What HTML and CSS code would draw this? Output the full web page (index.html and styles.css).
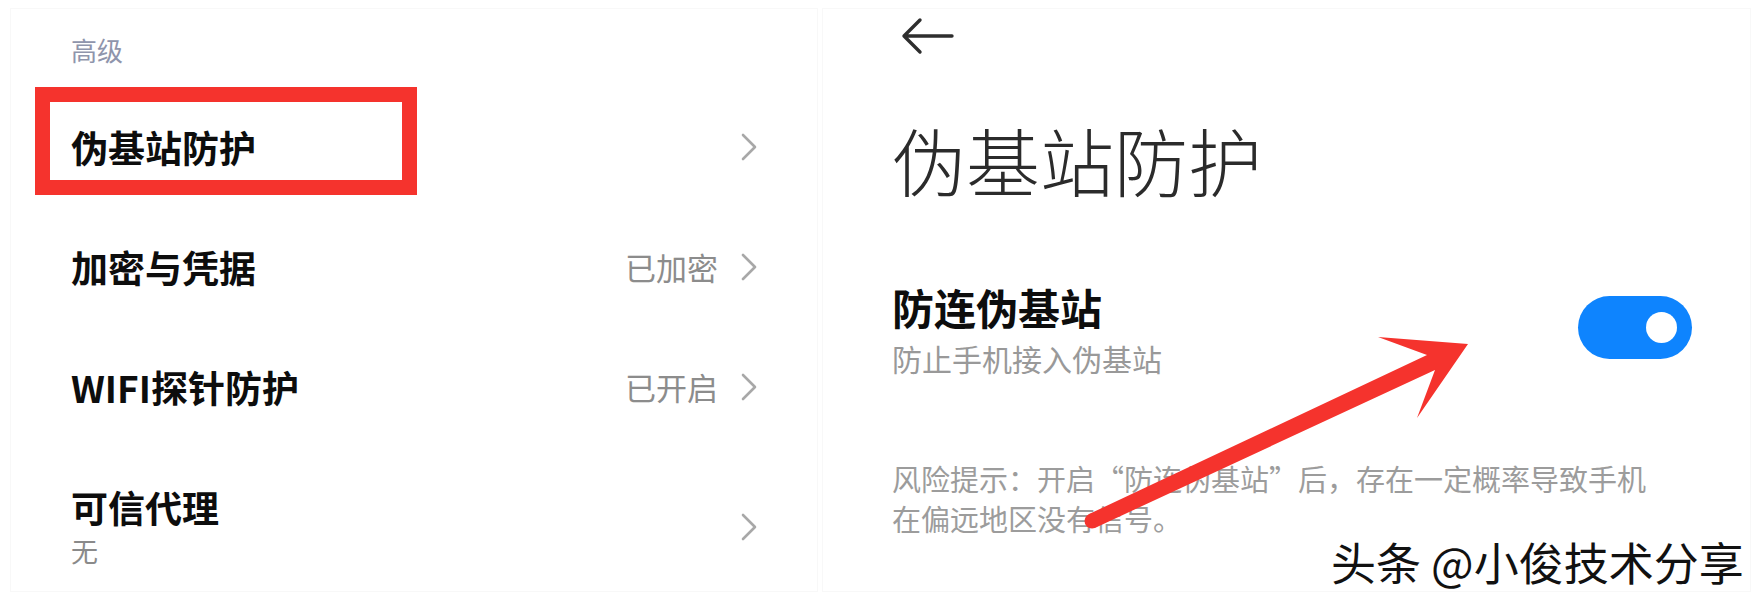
FILE: index.html
```html
<!DOCTYPE html>
<html lang="zh-CN">
<head>
<meta charset="utf-8">
<title>伪基站防护</title>
<link rel="stylesheet" href="styles.css">
</head>
<body>
<div class="page">
  <section class="panel panel-left">
    <div class="group-label">高级</div>
    <div class="row">
      <span class="row-title">伪基站防护</span>
      <span class="row-end">
        <svg class="chev" viewBox="0 0 18 30" width="18" height="30"><polyline points="3,3 15,15 3,27"/></svg>
      </span>
    </div>
    <div class="row">
      <span class="row-title">加密与凭据</span>
      <span class="row-end">
        <span class="row-value">已加密</span>
        <svg class="chev" viewBox="0 0 18 30" width="18" height="30"><polyline points="3,3 15,15 3,27"/></svg>
      </span>
    </div>
    <div class="row">
      <span class="row-title">WIFI探针防护</span>
      <span class="row-end">
        <span class="row-value">已开启</span>
        <svg class="chev" viewBox="0 0 18 30" width="18" height="30"><polyline points="3,3 15,15 3,27"/></svg>
      </span>
    </div>
    <div class="row row-tall">
      <span class="row-text">
        <span class="row-title">可信代理</span>
        <span class="row-sub">无</span>
      </span>
      <span class="row-end">
        <svg class="chev" viewBox="0 0 18 30" width="18" height="30"><polyline points="3,3 15,15 3,27"/></svg>
      </span>
    </div>
  </section>

  <section class="panel panel-right">
    <div class="topbar">
      <svg class="back" viewBox="0 0 56 40" width="56" height="40"><path d="M4 20 H52 M20 4 L4 20 L20 36"/></svg>
    </div>
    <h1 class="page-title">伪基站防护</h1>
    <div class="setting">
      <div class="setting-text">
        <div class="setting-title">防连伪基站</div>
        <div class="setting-sub">防止手机接入伪基站</div>
      </div>
      <div class="toggle"><span class="knob"></span></div>
    </div>
    <p class="risk">风险提示：开启“防连伪基站”后，存在一定概率导致手机在偏远地区没有信号。</p>
  </section>

  <svg class="annot" viewBox="0 0 1762 603" width="1762" height="603">
    <rect x="42.5" y="94.5" width="367" height="93" fill="none" stroke="#f5332d" stroke-width="15"/>
    <circle cx="1092" cy="521" r="7.5" fill="#f5332d"/>
    <polygon fill="#f5332d" points="1088.6,514.3 1427,355 1378,337 1468,344 1417,418 1435,370 1095.4,527.7"/>
  </svg>
  <div class="watermark">头条 @小俊技术分享</div>
</div>
</body>
</html>
```

FILE: styles.css
```css
html, body {
  margin: 0;
  padding: 0;
  background: #ffffff;
}

body {
  font-family: "Noto Sans CJK SC", "Noto Sans", sans-serif;
  color: #111;
}

.page {
  position: relative;
  width: 1762px;
  height: 603px;
  box-sizing: border-box;
  padding: 8px 0 0 10px;
  display: flex;
  gap: 4px;
  overflow: hidden;
}

.panel {
  box-sizing: border-box;
  height: 584px;
  border: 1px solid #f8f8f8;
  background: #fff;
}

.panel-left {
  width: 808px;
  padding: 0 59px 0 60px;
  display: flex;
  flex-direction: column;
}

.group-label {
  height: 78px;
  box-sizing: border-box;
  padding-top: 28px;
  font-size: 26px;
  line-height: 26px;
  color: #8f95ac;
}

.row {
  height: 120px;
  display: flex;
  align-items: center;
  justify-content: space-between;
}

.row-tall {
  height: auto;
  padding-top: 40px;
}

.row-text {
  display: flex;
  flex-direction: column;
}

.row-title {
  font-size: 37px;
  line-height: 40px;
  font-weight: 700;
  color: #0d0d0d;
}

.row-sub {
  margin-top: 8px;
  font-size: 27px;
  line-height: 32px;
  color: #8a8a8a;
}

.row-end {
  display: flex;
  align-items: center;
  gap: 22px;
}

.row-value {
  font-size: 31px;
  line-height: 40px;
  color: #8c8c8c;
}

.chev {
  display: block;
}

.chev polyline {
  fill: none;
  stroke: #a8a8a8;
  stroke-width: 2.6;
  stroke-linecap: round;
  stroke-linejoin: round;
}

.panel-right {
  width: 929px;
  padding: 0 58px 0 69px;
  display: flex;
  flex-direction: column;
}

.topbar {
  height: 56px;
  display: flex;
  align-items: center;
}

.back {
  display: block;
  margin-left: 8px;
  margin-top: -2px;
}

.back path {
  fill: none;
  stroke: #2e2e2e;
  stroke-width: 3.4;
  stroke-linecap: round;
  stroke-linejoin: round;
}

.page-title {
  margin: 57px 0 0 0;
  font-size: 74px;
  line-height: 74px;
  font-weight: 300;
  color: #2b2b2b;
}

.setting {
  margin-top: 86px;
  display: flex;
  align-items: flex-start;
  justify-content: space-between;
}

.setting-title {
  font-size: 42px;
  line-height: 50px;
  font-weight: 700;
  color: #0d0d0d;
}

.setting-sub {
  margin-top: 6px;
  font-size: 30px;
  line-height: 40px;
  color: #999;
}

.toggle {
  margin-top: 14px;
  width: 114px;
  height: 63px;
  border-radius: 32px;
  background: #0e84fe;
  display: flex;
  align-items: center;
  justify-content: flex-end;
  padding-right: 15px;
  box-sizing: border-box;
}

.knob {
  width: 31px;
  height: 31px;
  border-radius: 50%;
  background: #fff;
}

.risk {
  margin: 80px 0 0 0;
  max-width: 760px;
  font-size: 29px;
  line-height: 40px;
  color: #9c9c9c;
}

.annot {
  position: absolute;
  left: 0;
  top: 0;
  pointer-events: none;
}

.watermark {
  position: absolute;
  left: 1331px;
  top: 540px;
  font-size: 45px;
  line-height: 44px;
  color: #111;
  white-space: nowrap;
  text-shadow: 1px 1px 0 #fff, -1px 0 0 #fff;
}
```
